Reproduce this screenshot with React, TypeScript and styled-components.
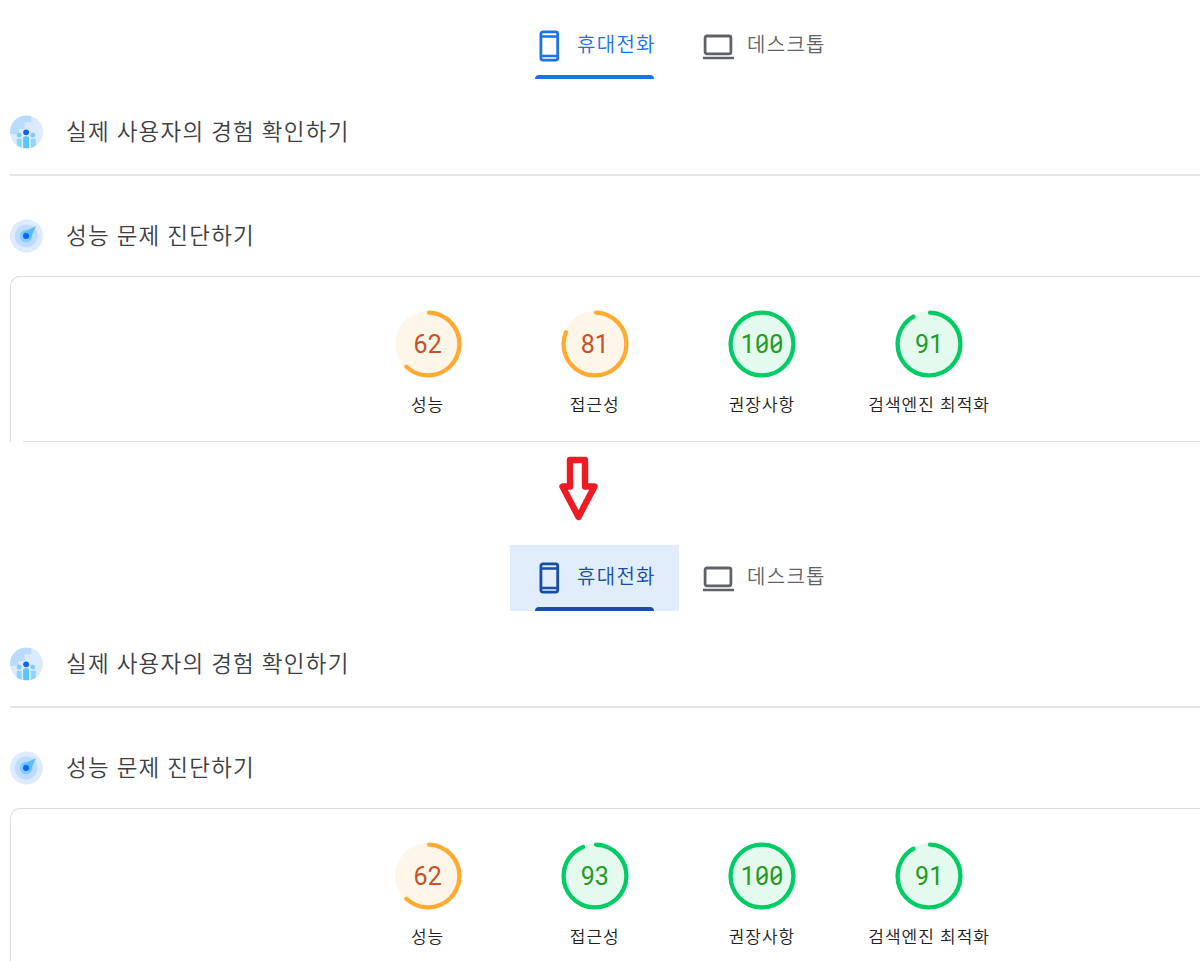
import React from 'react';
import styled, { createGlobalStyle } from 'styled-components';

type Level = 'average' | 'pass';

interface Score {
  label: string;
  value: number;
}

const GlobalStyle = createGlobalStyle`
  * {
    box-sizing: border-box;
  }

  body {
    margin: 0;
    background-color: #fff;
    overflow: hidden;
    font-family: Roboto, 'Noto Sans CJK KR', sans-serif;
  }
`;

const PageWrapper = styled.main`
  width: 1200px;
  height: 961px;
  overflow: hidden;
`;

const ReportWrapper = styled.section`
  height: 442px;
`;

const TabBarWrapper = styled.nav`
  display: flex;
  padding: 13px 0 0 510px;
`;

const TabWrapper = styled.div<{ $color: string; $background?: string }>`
  display: flex;
  width: 169px;
  height: 66px;
  flex-direction: column;
  justify-content: space-between;
  background-color: ${(props) => props.$background || 'transparent'};
  padding: 0 25px 0 24px;
  color: ${(props) => props.$color};
`;

const TabContent = styled.div`
  display: flex;
  align-items: center;
  height: 62px;

  > svg {
    flex: none;
    margin-top: 4px;
  }
`;

const TabLabel = styled.span`
  margin-top: 1px;
  margin-left: 12px;
  font-size: 20px;
  font-weight: 350;
  line-height: 30px;
  letter-spacing: 1.3px;
  white-space: nowrap;
`;

const TabIndicator = styled.div`
  margin-left: 1px;
  border-radius: 4px 4px 0 0;
  background-color: currentColor;
  width: 119px;
  height: 4px;
`;

const HeadingWrapper = styled.header<{ $divided?: boolean }>`
  display: flex;
  align-items: center;
  margin-left: 10px;
  border-bottom: ${(props) => (props.$divided ? '2px solid #e6e6e6' : 'none')};
  height: ${(props) => (props.$divided ? '97px' : '100px')};
  padding-top: ${(props) => (props.$divided ? '11px' : '20px')};
`;

const HeadingTitle = styled.h2`
  margin: 0 0 0 23px;
  color: #3c4043;
  font-size: 22.5px;
  font-weight: 350;
  line-height: 34px;
  letter-spacing: 1.25px;
`;

const ScoreCard = styled.div`
  display: flex;
  flex-direction: column;
  justify-content: space-between;
  margin-left: 10px;
  border-top: 1.5px solid #dadce0;
  border-left: 1.5px solid #dadce0;
  border-top-left-radius: 10px;
  height: 166px;
`;

const ScoreList = styled.div`
  display: flex;
  padding: 33px 0 0 333px;
`;

const ScoreItem = styled.div`
  display: flex;
  flex-direction: column;
  align-items: center;
  width: 167.2px;
`;

const CardFooter = styled.div`
  margin-left: 12px;
  background-color: #dfdfdf;
  height: 1px;
`;

const GaugeWrapper = styled.div`
  display: grid;
  width: 68px;
  height: 68px;
  place-items: center;

  > * {
    grid-area: 1 / 1;
  }
`;

const GaugeValue = styled.span<{ $level: Level }>`
  display: flex;
  margin-top: 1px;
  color: ${(props) => (props.$level === 'pass' ? '#259a25' : '#c8502a')};
  font-size: 25px;
  line-height: 30px;
`;

const Digit = styled.span<{ $slashed?: boolean }>`
  display: grid;
  width: 14.2px;
  place-items: center;

  &::after {
    display: ${(props) => (props.$slashed ? 'block' : 'none')};
    grid-area: 1 / 1;
    transform: rotate(-38deg);
    background-color: currentColor;
    width: 10px;
    height: 1.5px;
    content: '';
  }
`;

const DigitText = styled.span`
  grid-area: 1 / 1;
`;

const ScoreLabel = styled.span`
  margin-top: 14px;
  color: #212121;
  font-size: 17px;
  font-weight: 350;
  line-height: 26px;
  letter-spacing: 1px;
  white-space: nowrap;
`;

const ArrowWrapper = styled.div`
  display: flex;
  height: 90px;
  padding: 14px 0 0 558px;
`;

const levelColors = {
  average: { stroke: '#fa3', fill: '#fff6ea' },
  pass: { stroke: '#0c6', fill: '#e5faef' },
};

const PhoneIcon = () => (
  <svg width='31' height='34' viewBox='0 0 31 34' fill='none' stroke='currentColor' strokeWidth='2.8'>
    <rect x='6.9' y='2.9' width='16.8' height='28.2' rx='2' />
    <path d='M7 7.5h17M7 26.9h17' strokeWidth='2.5' />
  </svg>
);

const LaptopIcon = () => (
  <svg width='32' height='34' viewBox='0 0 32 34' fill='none' stroke='currentColor' strokeWidth='2.8'>
    <rect x='2.1' y='7' width='25.8' height='17.8' rx='1.8' />
    <path d='M0 29h31' strokeWidth='2.5' />
  </svg>
);

const UsersIcon = () => (
  <svg width='33' height='34' viewBox='0 0 34 34'>
    <clipPath id='users-clip'>
      <circle cx='17' cy='17' r='17' />
    </clipPath>
    <g clipPath='url(#users-clip)'>
      <path fill='#dceafe' d='M0 0h34v34H0z' />
      <path fill='#b9dbff' d='M0 0h22v7h-7v7H9v5H0z' />
      <circle cx='9.5' cy='20.3' r='2.4' fill='#78cdfc' />
      <circle cx='23.5' cy='20.3' r='2.4' fill='#78cdfc' />
      <path fill='#8ad6ff' d='M7 24h5v10H7zM21.5 24h5v10h-5z' />
      <path fill='#5bc4fb' d='M13.6 22.5q3-2 6 0V34h-6z' />
      <circle cx='16.6' cy='17.3' r='3' fill='#1462ed' />
    </g>
  </svg>
);

const DiagnoseIcon = () => (
  <svg width='33' height='34' viewBox='0 0 34 34'>
    <circle cx='17' cy='17' r='17' fill='#deebff' />
    <circle cx='16.6' cy='17' r='11.8' fill='#bedcff' />
    <circle cx='16.6' cy='17' r='6.5' fill='#86ccff' />
    <path fill='#58bdf8' d='M12.8 13.6 26.8 6.7 20.5 20.5z' />
    <circle cx='16.5' cy='17' r='3.1' fill='#0b65f4' />
  </svg>
);

const Gauge = ({ value }: { value: number }) => {
  const level: Level = value >= 90 ? 'pass' : 'average';
  const { stroke, fill } = levelColors[level];
  const length = 2 * Math.PI * 31.5;
  // round caps extend past both ends of the arc
  const filled = value === 100 ? length : (length * value) / 100 - (value >= 90 ? 0.5 : 1.5);

  return (
    <GaugeWrapper>
      <svg width='68' height='68' viewBox='0 0 68 68'>
        <circle cx='34' cy='34' r='33' fill={fill} />
        <circle
          cx='34'
          cy='34'
          r='31.4'
          fill='none'
          stroke={stroke}
          strokeWidth='4.3'
          strokeLinecap='round'
          strokeDasharray={`${filled} ${length}`}
          transform='rotate(-88 34 34)'
        />
      </svg>
      <GaugeValue $level={level}>
        {String(value)
          .split('')
          .map((digit, index) => (
            <Digit key={index} $slashed={digit === '0'}>
              <DigitText>{digit}</DigitText>
            </Digit>
          ))}
      </GaugeValue>
    </GaugeWrapper>
  );
};

const Report = ({ scores, focused }: { scores: Score[]; focused?: boolean }) => (
  <ReportWrapper>
    <TabBarWrapper>
      <TabWrapper $color={focused ? '#174ea6' : '#1a73e8'} $background={focused ? '#e2edfc' : undefined}>
        <TabContent>
          <PhoneIcon />
          <TabLabel>휴대전화</TabLabel>
        </TabContent>
        <TabIndicator />
      </TabWrapper>
      <TabWrapper $color='#5f6368'>
        <TabContent>
          <LaptopIcon />
          <TabLabel>데스크톱</TabLabel>
        </TabContent>
      </TabWrapper>
    </TabBarWrapper>
    <HeadingWrapper $divided>
      <UsersIcon />
      <HeadingTitle>실제 사용자의 경험 확인하기</HeadingTitle>
    </HeadingWrapper>
    <HeadingWrapper>
      <DiagnoseIcon />
      <HeadingTitle>성능 문제 진단하기</HeadingTitle>
    </HeadingWrapper>
    <ScoreCard>
      <ScoreList>
        {scores.map((score) => (
          <ScoreItem key={score.label}>
            <Gauge value={score.value} />
            <ScoreLabel>{score.label}</ScoreLabel>
          </ScoreItem>
        ))}
      </ScoreList>
      <CardFooter />
    </ScoreCard>
  </ReportWrapper>
);

const getScores = (accessibility: number): Score[] => [
  { label: '성능', value: 62 },
  { label: '접근성', value: accessibility },
  { label: '권장사항', value: 100 },
  { label: '검색엔진 최적화', value: 91 },
];

const App = () => {
  return (
    <PageWrapper>
      <GlobalStyle />
      <Report scores={getScores(81)} />
      <ArrowWrapper>
        <svg width='42' height='66' viewBox='0 0 42 66'>
          <path
            d='M12 4h15v26.5h9.5L20.5 61 4.5 30.5H12z'
            fill='#fff'
            stroke='#ed1c24'
            strokeWidth='6.4'
            strokeLinejoin='round'
          />
        </svg>
      </ArrowWrapper>
      <Report scores={getScores(93)} focused />
    </PageWrapper>
  );
};

export default App;
